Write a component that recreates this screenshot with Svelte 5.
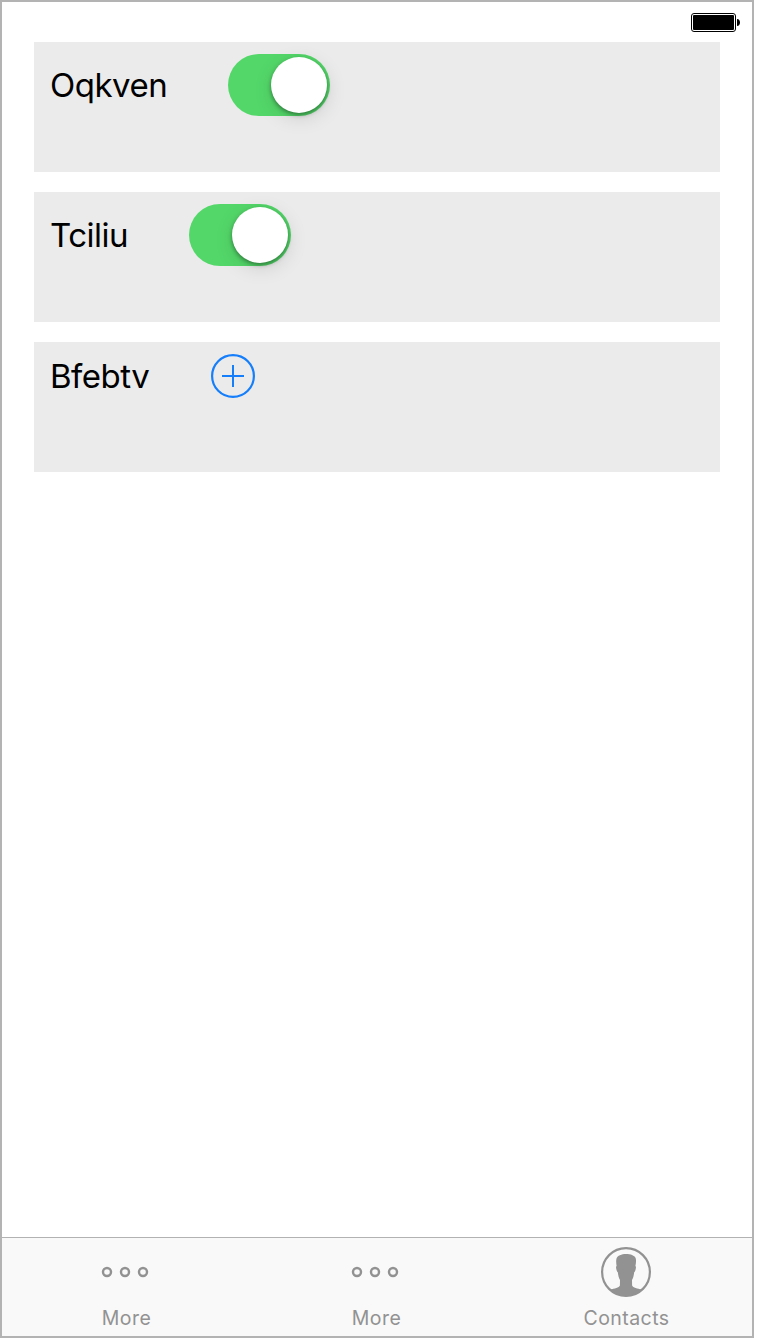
<script>
  const rows = [
    { label: 'Oqkven', width: 118, spacing: -0.5, kind: 'switch' },
    { label: 'Tciliu', width: 79, spacing: -0.5, kind: 'switch' },
    { label: 'Bfebtv', width: 101, spacing: -0.5, kind: 'add' }
  ];
  const tabs = [
    { label: 'More', icon: 'more' },
    { label: 'More', icon: 'more' },
    { label: 'Contacts', icon: 'contacts' }
  ];
</script>

<div class="screen">
  <header class="status">
    <svg width="50" height="20" viewBox="0 0 50 20">
      <rect x="0.5" y="0.5" width="44" height="18" rx="2.5" fill="#fff" stroke="#000" />
      <rect x="2" y="2" width="41" height="15" rx="1" fill="#000" />
      <path d="M46 6C48 6 49 7.8 49 9.5S48 13 46 13Z" fill="#000" />
    </svg>
  </header>

  <main>
    {#each rows as row}
      <section class="card">
        <div class="line">
          <span class="label" style="width: {row.width}px; letter-spacing: {row.spacing}px">{row.label}</span>
          {#if row.kind === 'switch'}
            <button class="switch" role="switch" aria-checked="true" aria-label={row.label}>
              <span class="knob"></span>
            </button>
          {:else}
            <button class="add" aria-label={row.label}>
              <svg width="44" height="44" viewBox="0 0 44 44" fill="none" stroke="#157efb" stroke-width="2">
                <circle cx="22" cy="22" r="20.9" stroke-width="2.2" />
                <path d="M11 22H33M22 11V33" />
              </svg>
            </button>
          {/if}
        </div>
      </section>
    {/each}
  </main>

  <nav>
    {#each tabs as tab}
      <div class="tab">
        <svg class="icon" width="50" height="50" viewBox="0 0 50 50">
          {#if tab.icon === 'more'}
            <g fill="none" stroke="#929292" stroke-width="2.4">
              <circle cx="6" cy="25" r="4" />
              <circle cx="24" cy="25" r="4" />
              <circle cx="42" cy="25" r="4" />
            </g>
          {:else}
            <circle cx="25" cy="25" r="23.9" fill="none" stroke="#929292" stroke-width="2.2" />
            <path
              fill="#929292"
              d="M25 7C20.5 7 16.5 8.5 15.5 11.5C14.9 14 15.2 16.5 15.6 19C14.9 19.4 14.9 20.4 15.3 22C15.6 23.6 16.1 24.8 16.8 25.2C17.2 28.5 17.9 31.3 19 33L18.9 38.5C18 41 13.5 41.3 9.2 42.6A24 24 0 0 0 40.8 42.6C36.5 41.3 32 41 31.1 38.5L31 33C32.2 31.3 32.8 28.5 33.2 25.2C33.9 24.8 34.4 23.6 34.7 22C35.1 20.4 35.1 19.4 34.4 19C34.9 16.5 35.5 13.5 34.6 11C33.5 8.5 29.5 7 25 7Z"
            />
          {/if}
        </svg>
        <span>{tab.label}</span>
      </div>
    {/each}
  </nav>
</div>

<style>
  :global(body) {
    margin: 0;
    background: #fff;
  }
  .screen {
    box-sizing: border-box;
    width: 754px;
    height: 1338px;
    border: 2px solid #b3b3b3;
    background: #fff;
    display: flex;
    flex-direction: column;
    font-family: Inter, 'Liberation Sans', sans-serif;
  }
  .status {
    height: 40px;
    box-sizing: border-box;
    padding: 11px 11px 0 0;
    display: flex;
    justify-content: flex-end;
    align-items: flex-start;
  }
  main {
    flex: 1;
    padding: 0 32px;
    display: flex;
    flex-direction: column;
    gap: 20px;
  }
  .card {
    box-sizing: border-box;
    height: 130px;
    padding: 12px 16px;
    background: #ebebeb;
  }
  .line {
    display: flex;
    align-items: center;
    gap: 60px;
  }
  .label {
    flex: none;
    font-size: 33px;
    line-height: 40px;
    white-space: nowrap;
    color: #000;
  }
  button {
    border: 0;
    margin: 0;
    padding: 0;
    background: none;
    display: flex;
  }
  .switch {
    box-sizing: border-box;
    width: 102px;
    height: 62px;
    padding: 3px;
    border-radius: 31px;
    background: #53d769;
    justify-content: flex-end;
  }
  .knob {
    width: 56px;
    height: 56px;
    border-radius: 50%;
    background: #fff;
    box-shadow: 0 2px 4px rgba(0, 0, 0, 0.38), 1px 5px 20px rgba(0, 0, 0, 0.12);
  }
  nav {
    box-sizing: border-box;
    height: 99px;
    border-top: 1px solid #b2b2b2;
    background: #f9f9f9;
    display: grid;
    grid-template-columns: repeat(3, 250px);
  }
  .tab {
    display: flex;
    flex-direction: column;
    align-items: center;
    padding: 9px 2px 0 0;
    color: #929292;
  }
  .icon {
    display: block;
    margin-bottom: 9px;
  }
  .tab span {
    font-size: 19.5px;
    line-height: 24px;
    letter-spacing: 0.45px;
    padding-left: 1px;
  }
</style>
